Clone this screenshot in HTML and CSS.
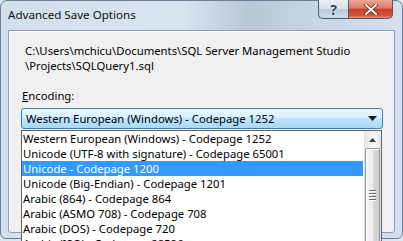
FILE: index.html
```html
<!DOCTYPE html>
<html lang="en">
<head>
    <meta charset="UTF-8">
    <title>Advanced Save Options</title>
    <link rel="stylesheet" href="styles.css">
</head>
<body>
    <div class="window">
        <div class="titlebar">
            <span class="title">Advanced Save Options</span>
            <div class="caption">
                <span class="help">?</span>
                <span class="close">
                    <svg width="14" height="11" viewBox="0 0 14 11">
                        <path d="M2 1 L12 10 M12 1 L2 10" stroke="#5a2018" stroke-width="3.6" stroke-linecap="round"/>
                        <path d="M2 1 L12 10 M12 1 L2 10" stroke="#fff" stroke-width="2" stroke-linecap="round"/>
                    </svg>
                </span>
            </div>
        </div>

        <div class="client">
            <p class="path">C:\Users\mchicu\Documents\SQL Server Management Studio<br>\Projects\SQLQuery1.sql</p>
            <label class="enc"><u>E</u>ncoding:</label>
            <div class="combo">
                <span>Western European (Windows) - Codepage 1252</span>
                <svg width="9" height="5" viewBox="0 0 9 5"><path d="M0 0 H9 L4.5 5 Z" fill="#1c1c1c"/></svg>
            </div>
        </div>

        <div class="droplist">
            <ul class="items">
                <li>Western European (Windows) - Codepage 1252</li>
                <li>Unicode (UTF-8 with signature) - Codepage 65001</li>
                <li class="sel">Unicode - Codepage 1200</li>
                <li>Unicode (Big-Endian) - Codepage 1201</li>
                <li>Arabic (864) - Codepage 864</li>
                <li>Arabic (ASMO 708) - Codepage 708</li>
                <li>Arabic (DOS) - Codepage 720</li>
                <li>Arabic (ISO) - Codepage 28596</li>
            </ul>
            <div class="scrollbar">
                <div class="sb-up">
                    <svg width="7" height="4" viewBox="0 0 7 4"><path d="M0 4 H7 L3.5 0 Z" fill="#3a3a3a"/></svg>
                </div>
                <div class="thumb">
                    <div class="grip"><i></i><i></i><i></i><i></i></div>
                </div>
            </div>
        </div>
    </div>
</body>
</html>
```

FILE: styles.css
```css
html, body {
    margin: 0;
    padding: 0;
    overflow: hidden;
}
body {
    width: 403px;
    height: 241px;
    background: #dbe5f0;
    font-family: 'Noto Sans', 'Open Sans', sans-serif;
    font-size: 11.3px;
    color: #000;
}
.window {
    width: 403px;
    height: 239px;
    box-sizing: border-box;
    border: 1px solid #6f7f93;
    border-radius: 7px 7px 6px 6px;
    background: linear-gradient(90deg, #d2dfec 0%, #d9e4ef 45%, #b9c7d6 62%, #c8d5e3 78%, #d4e0ec 100%);
    padding: 0 7px 5px;
    display: flex;
    flex-direction: column;
    position: relative;
}
.titlebar {
    height: 29px;
    display: flex;
    align-items: flex-start;
    justify-content: space-between;
    flex-shrink: 0;
}
.title {
    margin-top: 6px;
    line-height: 16px;
    font-size: 11.6px;
    color: #111;
}
.caption {
    display: flex;
    margin-right: 2px;
    margin-top: -1px;
}
.help, .close {
    height: 19px;
    display: flex;
    align-items: center;
    justify-content: center;
    box-sizing: border-box;
    border: 1px solid #4d5b6e;
    border-top: none;
}
.help {
    width: 30px;
    border-radius: 0 0 0 5px;
    border-right: none;
    background: linear-gradient(#e9eef4 0%, #d6dfe9 50%, #bccad9 52%, #cfdbe8 100%);
    color: #3d4650;
    font-weight: bold;
    font-size: 14px;
    text-shadow: 0 0 2px #fff;
}
.close {
    width: 45px;
    border-radius: 0 0 5px 0;
    background: linear-gradient(#eba796 0%, #dc7a66 45%, #c7402c 52%, #cf543d 85%, #e58f7b 100%);
}
.client {
    flex: 1;
    background: #f0f0f0;
    border: 1px solid #8a9db6;
    border-radius: 0 0 3px 3px;
    box-shadow: inset 1px 1px 0 #fff;
    padding: 12px 0 0 12px;
}
.path {
    margin: 0 0 0 4px;
    line-height: 15px;
}
.enc {
    display: block;
    margin: 15px 0 5px 1px;
    line-height: 15px;
}
.combo {
    width: 362px;
    height: 21px;
    box-sizing: border-box;
    border: 1px solid #3c7fb1;
    border-radius: 3px;
    background: linear-gradient(#eaf6fd 0%, #d9f0fc 45%, #bee6fd 50%, #a7d9f5 100%);
    display: flex;
    align-items: center;
    justify-content: space-between;
    padding: 0 5px 0 4px;
}
.droplist {
    position: absolute;
    left: 20px;
    top: 129px;
    width: 361px;
    height: 111px;
    box-sizing: border-box;
    border: 1px solid #646464;
    border-bottom: none;
    background: #fff;
    display: flex;
    overflow: hidden;
}
.items {
    list-style: none;
    margin: 0;
    padding: 0;
    flex: 1;
}
.items li {
    height: 15px;
    line-height: 15px;
    padding-left: 1px;
    white-space: nowrap;
    overflow: hidden;
}
.items li.sel {
    background: #3399ff;
    color: #fff;
}
.scrollbar {
    width: 17px;
    margin-left: 1px;
    background: linear-gradient(90deg, #e3e3e3, #f5f5f5 40%, #f5f5f5 70%, #e3e3e3);
    display: flex;
    flex-direction: column;
}
.sb-up {
    height: 17px;
    display: flex;
    align-items: center;
    justify-content: center;
}
.thumb {
    flex: 1;
    margin: 0 1px;
    border: 1px solid #979797;
    border-bottom: none;
    border-radius: 2px 2px 0 0;
    background: linear-gradient(90deg, #f4f4f4, #ececec 50%, #dadada 51%, #cfcfcf);
    box-shadow: inset 1px 1px 0 #fff;
    display: flex;
    justify-content: center;
    padding-top: 41px;
}
.grip {
    display: flex;
    flex-direction: column;
    gap: 1px;
}
.grip i {
    display: block;
    width: 7px;
    height: 1px;
    background: #6e6e6e;
    border-bottom: 1px solid #fff;
}
```
